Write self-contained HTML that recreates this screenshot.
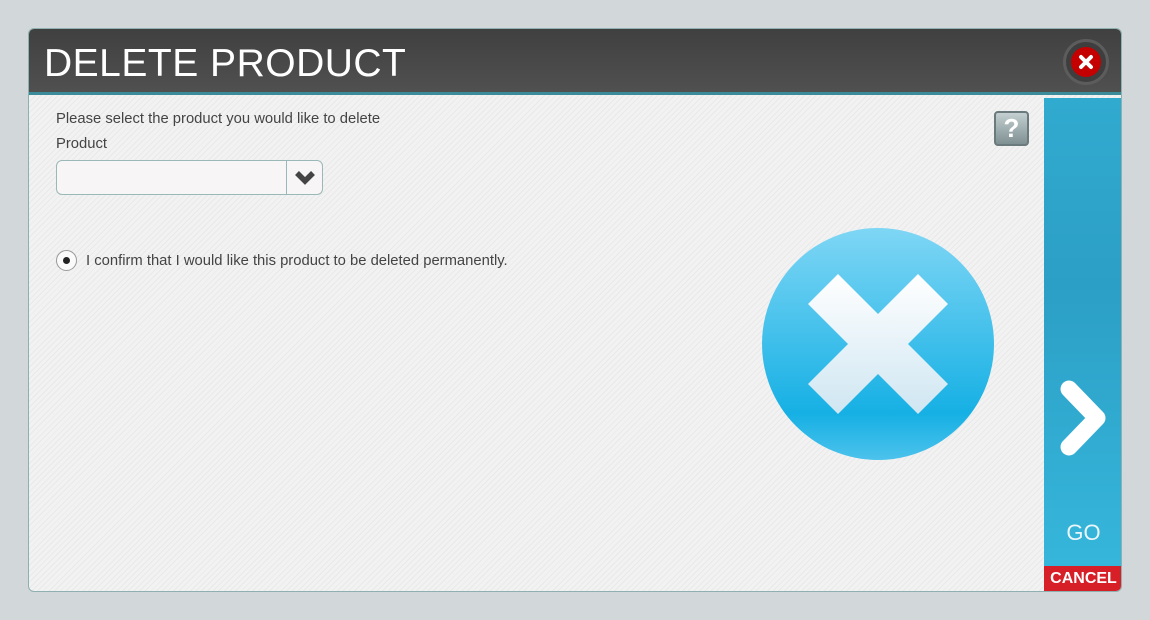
<!DOCTYPE html>
<html><head><meta charset="utf-8"><style>
*{margin:0;padding:0;box-sizing:border-box}
body{width:1150px;height:620px;background:#d2d7d9;font-family:"Liberation Sans",sans-serif;position:relative;overflow:hidden}
.dlg{position:absolute;left:28px;top:28px;width:1094px;height:564px;border-radius:6px;border:1px solid #8fb0b0;overflow:hidden;background:repeating-linear-gradient(135deg,#f2f2f2 0 3px,#e9e9e9 3px 4px)}
.hdr{position:absolute;left:0;top:0;width:100%;height:66px;background:linear-gradient(#404040,#505050);border-bottom:3px solid #3b8b9b}
.hdr h1{position:absolute;left:15px;top:13px;color:#fff;font-size:39px;font-weight:normal;letter-spacing:0.5px}
.cl{position:absolute;left:1034px;top:10px;width:46px;height:46px;border-radius:50%;border:3px solid #5c5c5c;background:#3e3e3e}
.cl div{position:absolute;left:5px;top:5px;width:30px;height:30px;border-radius:50%;background:#c40000}
.txt{position:absolute;color:#444;font-size:14.8px}
.sel{position:absolute;left:27px;top:131px;width:267px;height:35px;border:1px solid #9ab8b8;border-radius:6px;background:#f7f5f5}
.sel .b{position:absolute;right:0;top:0;width:36px;height:33px;border-left:1px solid #9ab8b8}
.radio{position:absolute;left:27px;top:221px;width:21px;height:21px;border-radius:50%;border:1px solid #999;background:#fafafa}
.radio:after{content:"";position:absolute;left:6px;top:6px;width:7px;height:7px;border-radius:50%;background:#222}
.q{position:absolute;left:965px;top:82px;width:35px;height:35px;border:2px solid #6b7a7d;border-radius:4px;background:linear-gradient(#c3cfd1,#7f9093);color:#fff;font-size:26px;font-weight:bold;text-align:center;line-height:31px}
.go{position:absolute;left:1015px;top:69px;width:79px;height:468px;background:linear-gradient(#31aad0,#2c9fc6 40%,#36b6db);}
.go span{position:absolute;left:0;width:100%;top:422px;text-align:center;color:#eaf6fa;font-size:22px}
.cancel{position:absolute;left:1015px;top:537px;width:79px;height:27px;background:#d61f26;color:#fff;font-size:16px;font-weight:bold;text-align:center;line-height:26px}
</style></head><body>
<div class="dlg">
<div class="hdr"><h1>DELETE PRODUCT</h1><div class="cl"><div><svg width="30" height="30"><path d="M10 10L20 20M20 10L10 20" stroke="#fff" stroke-width="4" stroke-linecap="round"/></svg></div></div></div>
<div class="txt" style="left:27px;top:82px">Please select the product you would like to delete</div>
<div class="txt" style="left:27px;top:107px">Product</div>
<div class="sel"><div class="b"><svg width="36" height="33"><path d="M10 12L18 20L26 12" stroke="#444" stroke-width="5.5" fill="none"/></svg></div></div>
<div class="radio"></div>
<div class="txt" style="left:57px;top:224px">I confirm that I would like this product to be deleted permanently.</div>
<div class="q">?</div>
<svg style="position:absolute;left:732px;top:198px" width="234" height="234">
<defs><linearGradient id="g" x1="0" y1="0" x2="0" y2="1"><stop offset="0" stop-color="#7fd6f5"/><stop offset="0.8" stop-color="#16b0e4"/><stop offset="1" stop-color="#4cc2ec"/></linearGradient>
<linearGradient id="w" x1="0" y1="0" x2="0" y2="1"><stop offset="0" stop-color="#fff"/><stop offset="1" stop-color="#cfe6f2"/></linearGradient></defs>
<circle cx="117" cy="117" r="116" fill="url(#g)"/>
<path d="M47 77L77 47L117 87L157 47L187 77L147 117L187 157L157 187L117 147L77 187L47 157L87 117Z" fill="url(#w)"/>
</svg>
<div class="go"><svg style="position:absolute;left:11px;top:280px" width="58" height="80"><path d="M14 11L42 40L14 69" stroke="#fff" stroke-width="17" stroke-linecap="round" stroke-linejoin="round" fill="none"/></svg><span>GO</span></div>
<div class="cancel">CANCEL</div>
</div>
</body></html>
